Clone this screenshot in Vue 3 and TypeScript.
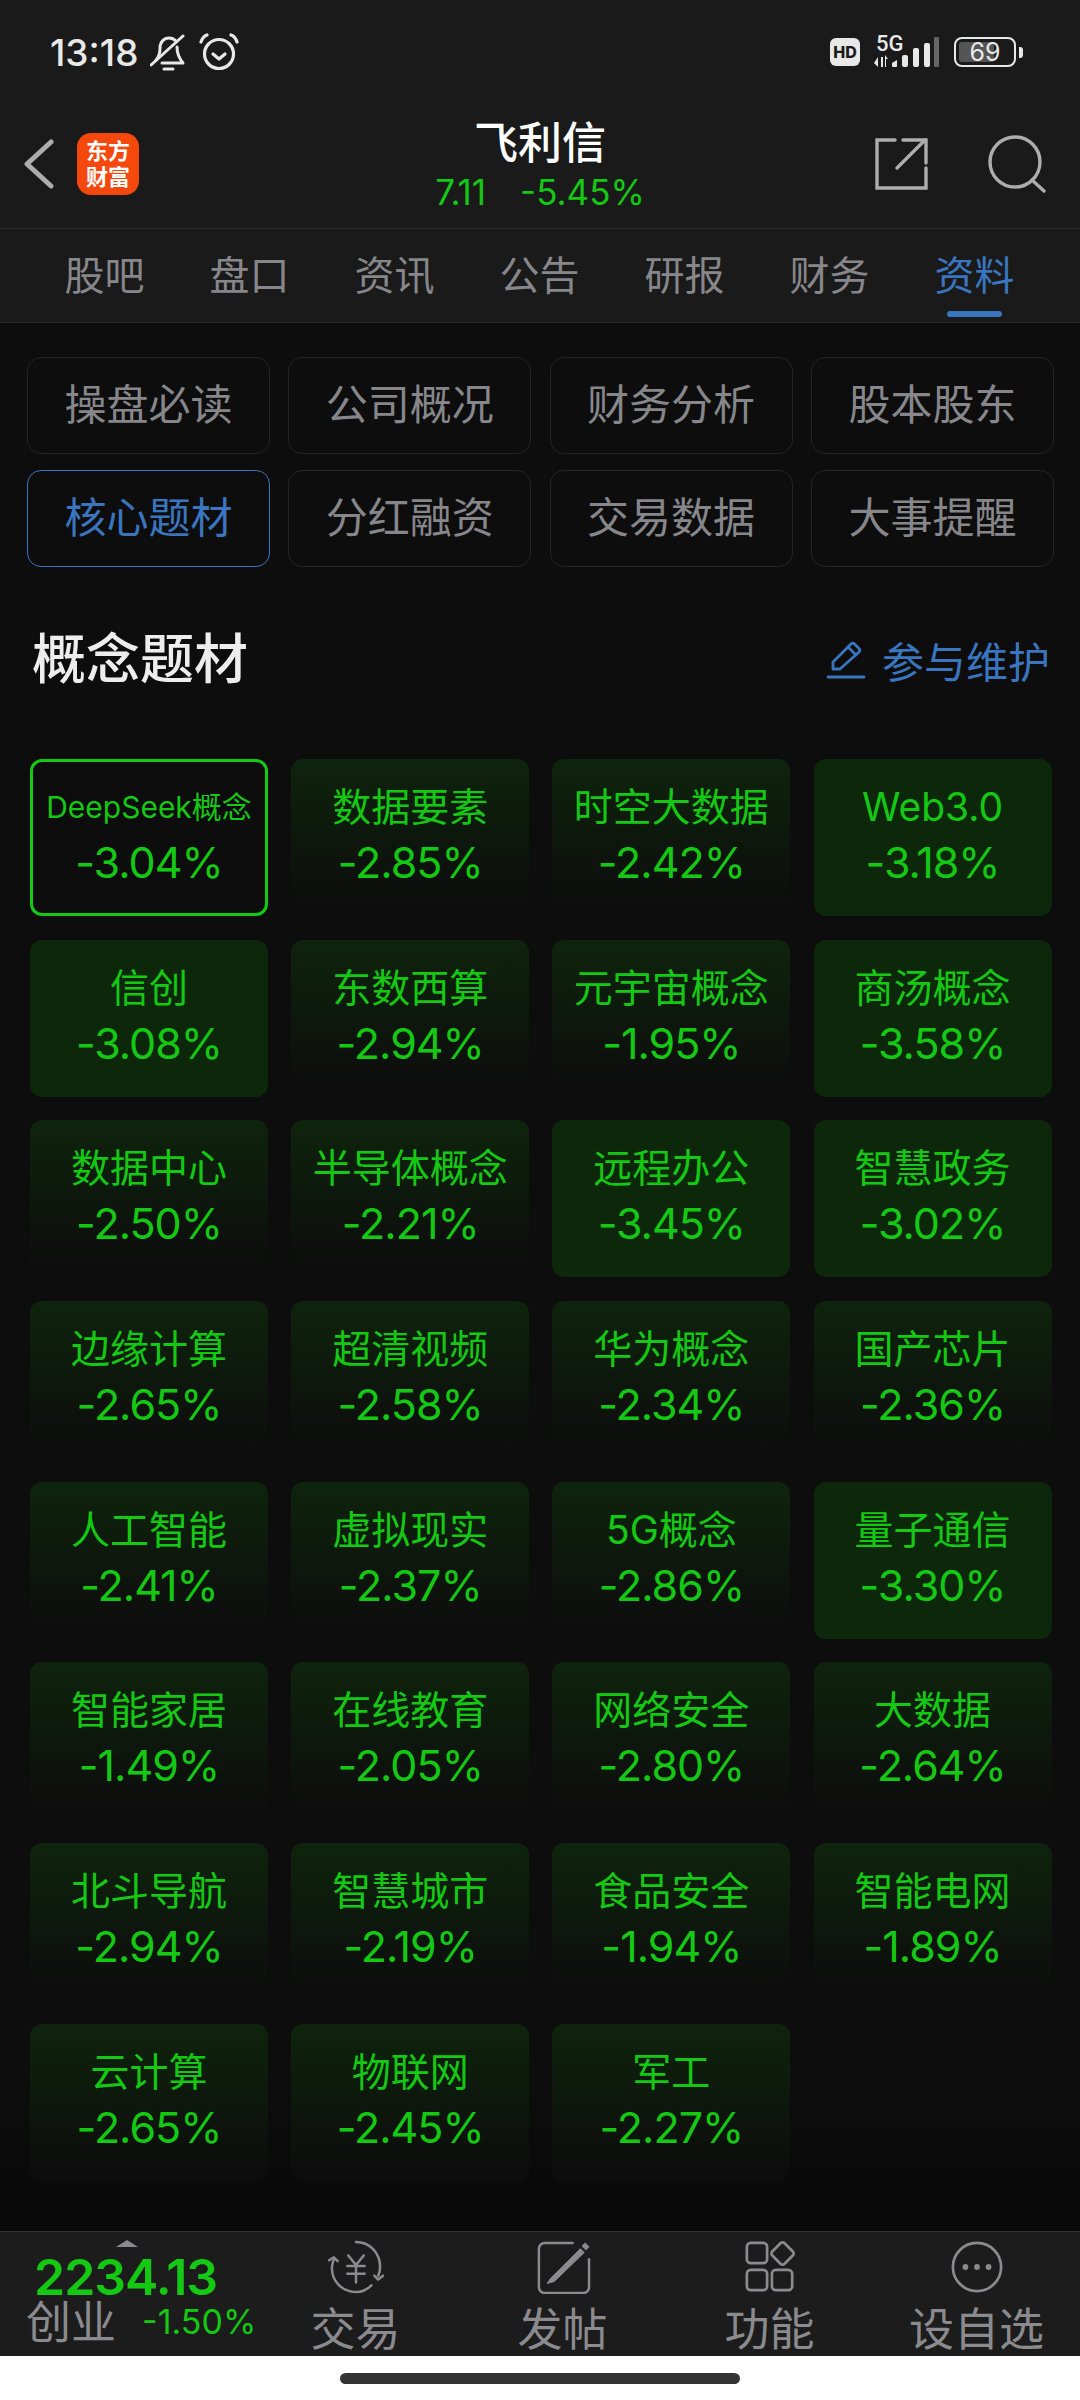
<template>
  <div class="page">
    <div class="top-bar">
      <div class="status">
        <div class="status-left">
          <span class="time">13:18</span>
          <svg class="bell" viewBox="0 0 36 38" width="36" height="38" fill="none" stroke="#e8e8e8" stroke-width="3" stroke-linecap="round" stroke-linejoin="round">
            <path d="M6 27c3-3 4-6 4-12 0-6 4-10 9-10 3 0 5 1 7 3" />
            <path d="M27 14c0 6 1 10 6 16H12" />
            <path d="M1 32 33 3" />
            <path d="M14 36h9" />
          </svg>
          <svg class="alarm" viewBox="0 0 40 38" width="40" height="38" fill="none" stroke="#e8e8e8" stroke-width="3.2" stroke-linecap="round" stroke-linejoin="round">
            <circle cx="20" cy="21" r="14.5" />
            <path d="M14 21l6 5 6-5" />
            <path d="M2 9c1-3 3-6 6-7" />
            <path d="M38 9c-1-3-3-6-6-7" />
          </svg>
        </div>
        <div class="status-right">
          <span class="hd">HD</span>
          <svg class="signal" viewBox="0 0 66 34" width="66" height="34">
            <text x="3" y="16" font-size="22" font-family="Roboto, sans-serif" font-weight="500" fill="#e8e8e8">5G</text>
            <path d="M5 22v10l-4-4zM8 22h2v10H8zM12 20l3 4h-2v8h-1z" fill="#e8e8e8" />
            <path d="M19 31v-3l5-3v6a1 1 0 0 1-1 1h-3a1 1 0 0 1-1-1z" fill="#e8e8e8" />
            <rect x="29" y="20" width="6" height="12" rx="2" fill="#e8e8e8" />
            <rect x="40" y="13" width="6" height="19" rx="2" fill="#e8e8e8" />
            <rect x="51" y="8" width="6" height="24" rx="2" fill="#e8e8e8" />
            <rect x="61" y="2" width="5" height="30" rx="1" fill="#666" />
          </svg>
          <div class="battery">
            <div class="battery-body">
              <i class="battery-fill"></i>
              <span class="battery-num">69</span>
            </div>
            <i class="battery-nub"></i>
          </div>
        </div>
      </div>

      <div class="nav">
        <div class="nav-left">
          <svg viewBox="0 0 30 50" width="30" height="50" fill="none" stroke="#adadad" stroke-width="5" stroke-linecap="round" stroke-linejoin="round">
            <path d="M27 3 3 25l24 22" />
          </svg>
          <div class="logo"><span>东方</span><span>财富</span></div>
        </div>
        <div class="nav-title">
          <div class="stock-name">飞利信</div>
          <div class="stock-price"><span>7.11</span><span>-5.45%</span></div>
        </div>
        <div class="nav-right">
          <svg viewBox="0 0 54 54" width="54" height="54" fill="none" stroke="#adadad" stroke-width="3.4" stroke-linecap="round" stroke-linejoin="miter">
            <path d="M21 3H3v48h49V31" />
            <path d="M23 31 51 3" />
            <path d="M29 3h23v23" />
          </svg>
          <svg viewBox="0 0 58 58" width="58" height="58" fill="none" stroke="#adadad" stroke-width="3.4" stroke-linecap="round">
            <circle cx="27" cy="27" r="25" />
            <path d="M44 45 56 56" />
          </svg>
        </div>
      </div>

      <div class="tabs">
        <div v-for="t in tabs" :key="t" class="tab" :class="{ on: t === '资料' }">
          {{ t }}
          <i v-if="t === '资料'" class="tab-line"></i>
        </div>
      </div>
    </div>

    <div class="content">
      <div class="menu">
        <div v-for="m in menus" :key="m" class="menu-btn" :class="{ on: m === '核心题材' }">{{ m }}</div>
      </div>

      <div class="section-head">
        <div class="section-title">概念题材</div>
        <div class="maintain">
          <svg viewBox="0 0 40 40" width="40" height="40" fill="none" stroke="#3a76bf" stroke-width="2.8" stroke-linejoin="round" stroke-linecap="round">
            <path d="M7 29v-7L25 4a2.5 2.5 0 0 1 3.5 0l4.5 4.5a2.5 2.5 0 0 1 0 3.5L14 29z" />
            <path d="M22 7l8 8" />
            <path d="M2 37h36" />
          </svg>
          <span>参与维护</span>
        </div>
      </div>

      <div class="concepts">
        <div
          v-for="c in concepts"
          :key="c.name"
          class="concept"
          :class="{ picked: c.picked, heavy: !c.picked && c.pct <= -3 }"
        >
          <div class="concept-name" :class="{ small: c.name.length > 8 }">{{ c.name }}</div>
          <div class="concept-pct">{{ c.pct.toFixed(2) }}%</div>
        </div>
      </div>
    </div>

    <div class="bottom">
      <div class="index">
        <i class="index-arrow"></i>
        <div class="index-value">2234.13</div>
        <div class="index-row">
          <span class="index-name">创业</span>
          <span class="index-pct">-1.50%</span>
        </div>
      </div>
      <div class="bottom-item">
        <svg viewBox="0 0 60 56" width="60" height="56" fill="none" stroke="#8b8b8f" stroke-width="2.6" stroke-linecap="round" stroke-linejoin="round">
          <path d="M30 2c14 0 25 11 25 26 0 4-1 7-2 9" />
          <path d="M46 47c-4 4-10 7-16 7-14 0-25-11-25-25 0-3 1-6 2-9" />
          <path d="M2 21l5-3 4 4M58 37l-5 4-4-4" />
          <path d="M22 16l8 10 8-10M21 27h18M21 35h18M30 26v18" />
        </svg>
        <span>交易</span>
      </div>
      <div class="bottom-item">
        <svg viewBox="0 0 56 56" width="56" height="56" fill="none" stroke="#8b8b8f" stroke-width="2.6" stroke-linecap="round" stroke-linejoin="round">
          <path d="M38 3H9a6 6 0 0 0-6 6v40a6 6 0 0 0 6 6h40a6 6 0 0 0 6-6V20" />
          <path d="M15 40 46 9l4 4-31 30-7 2z" fill="#8b8b8f" stroke-width="1" />
          <path d="M48 6l3-3 4 4-3 3z" fill="#8b8b8f" stroke-width="1" />
        </svg>
        <span>发帖</span>
      </div>
      <div class="bottom-item">
        <svg viewBox="0 0 56 56" width="56" height="56" fill="none" stroke="#8b8b8f" stroke-width="2.8" stroke-linejoin="round">
          <rect x="4" y="3" width="21" height="21" rx="4" />
          <rect x="4" y="31" width="21" height="21" rx="4" />
          <rect x="30" y="31" width="21" height="21" rx="4" />
          <rect x="32" y="5" width="18" height="18" rx="3" transform="rotate(45 41 14)" />
        </svg>
        <span>功能</span>
      </div>
      <div class="bottom-item">
        <svg viewBox="0 0 56 56" width="56" height="56" fill="none" stroke="#8b8b8f" stroke-width="2.8">
          <circle cx="28" cy="28" r="25" />
          <circle cx="16" cy="28" r="3" fill="#8b8b8f" stroke="none" />
          <circle cx="28" cy="28" r="3" fill="#8b8b8f" stroke="none" />
          <circle cx="40" cy="28" r="3" fill="#8b8b8f" stroke="none" />
        </svg>
        <span>设自选</span>
      </div>
    </div>

    <div class="gesture"><i></i></div>
  </div>
</template>

<script setup lang="ts">
interface Concept {
  name: string
  pct: number
  picked?: boolean
}

const tabs = ['股吧', '盘口', '资讯', '公告', '研报', '财务', '资料']

const menus = ['操盘必读', '公司概况', '财务分析', '股本股东', '核心题材', '分红融资', '交易数据', '大事提醒']

const concepts: Concept[] = [
  { name: 'DeepSeek概念', pct: -3.04, picked: true },
  { name: '数据要素', pct: -2.85 },
  { name: '时空大数据', pct: -2.42 },
  { name: 'Web3.0', pct: -3.18 },
  { name: '信创', pct: -3.08 },
  { name: '东数西算', pct: -2.94 },
  { name: '元宇宙概念', pct: -1.95 },
  { name: '商汤概念', pct: -3.58 },
  { name: '数据中心', pct: -2.5 },
  { name: '半导体概念', pct: -2.21 },
  { name: '远程办公', pct: -3.45 },
  { name: '智慧政务', pct: -3.02 },
  { name: '边缘计算', pct: -2.65 },
  { name: '超清视频', pct: -2.58 },
  { name: '华为概念', pct: -2.34 },
  { name: '国产芯片', pct: -2.36 },
  { name: '人工智能', pct: -2.41 },
  { name: '虚拟现实', pct: -2.37 },
  { name: '5G概念', pct: -2.86 },
  { name: '量子通信', pct: -3.3 },
  { name: '智能家居', pct: -1.49 },
  { name: '在线教育', pct: -2.05 },
  { name: '网络安全', pct: -2.8 },
  { name: '大数据', pct: -2.64 },
  { name: '北斗导航', pct: -2.94 },
  { name: '智慧城市', pct: -2.19 },
  { name: '食品安全', pct: -1.94 },
  { name: '智能电网', pct: -1.89 },
  { name: '云计算', pct: -2.65 },
  { name: '物联网', pct: -2.45 },
  { name: '军工', pct: -2.27 },
]
</script>

<style scoped>
.page {
  width: 1080px;
  height: 2400px;
  display: flex;
  flex-direction: column;
  background: #0d0d0d;
  font-family: Inter, "Noto Sans CJK SC", sans-serif;
  overflow: hidden;
}

.top-bar {
  background: #1a1a1a;
  border-bottom: 1px solid #2a2a2a;
}

.status {
  height: 104px;
  padding: 0 57px 0 50px;
  display: flex;
  justify-content: space-between;
  align-items: flex-start;
  box-sizing: border-box;
}

.status-left {
  display: flex;
  align-items: center;
  height: 40px;
  margin-top: 32px;
}

.time {
  font-size: 37px;
  font-weight: 500;
  color: #e8e8e8;
}

.bell {
  margin-left: 12px;
}

.alarm {
  margin-left: 13px;
}

.status-right {
  display: flex;
  align-items: center;
  height: 34px;
  margin-top: 35px;
}

.hd {
  width: 30px;
  height: 28px;
  border-radius: 6px;
  background: #e8e8e8;
  color: #1a1a1a;
  font-size: 16px;
  font-weight: 800;
  line-height: 28px;
  text-align: center;
}

.signal {
  margin-left: 13px;
  overflow: visible;
}

.battery {
  margin-left: 15px;
  display: flex;
  align-items: center;
}

.battery-body {
  width: 62px;
  height: 30px;
  box-sizing: border-box;
  border: 2.5px solid #e8e8e8;
  border-radius: 8px;
  position: relative;
  padding: 3px;
}

.battery-fill {
  display: block;
  width: 68%;
  height: 100%;
  background: #555;
  border-radius: 3px;
}

.battery-num {
  position: absolute;
  left: 0;
  right: 0;
  top: -2px;
  text-align: center;
  font-size: 25px;
  line-height: 30px;
  color: #e8e8e8;
}

.battery-nub {
  width: 4px;
  height: 11px;
  margin-left: 3px;
  border-radius: 0 3px 3px 0;
  background: #e8e8e8;
}

.nav {
  height: 124px;
  padding: 0 34px 0 24px;
  display: grid;
  grid-template-columns: 1fr auto 1fr;
  align-items: center;
  border-bottom: 1px solid #2e2e2e;
}

.nav-left {
  display: flex;
  align-items: center;
  gap: 23px;
  margin-top: -4px;
}

.logo {
  width: 62px;
  height: 62px;
  border-radius: 14px;
  background: #f5480c;
  color: #fff;
  display: flex;
  flex-direction: column;
  align-items: center;
  justify-content: center;
  font-size: 22px;
  font-weight: 700;
  line-height: 26px;
}

.nav-title {
  text-align: center;
  margin: -1px 0 0 10px;
}

.stock-name {
  font-size: 44px;
  font-weight: 500;
  line-height: 52px;
  color: #fff;
}

.stock-price {
  display: flex;
  justify-content: center;
  gap: 34px;
  font-size: 35px;
  line-height: 46px;
  color: #14c814;
}

.nav-right {
  display: flex;
  justify-content: flex-end;
  align-items: center;
  gap: 60px;
  margin-top: -4px;
}

.tabs {
  height: 93px;
  padding: 0 32px;
  display: flex;
}

.tab {
  width: 145px;
  position: relative;
  text-align: center;
  font-size: 40px;
  line-height: 94px;
  color: #87878b;
}

.tab.on {
  color: #3a76bf;
}

.tab-line {
  position: absolute;
  left: 45px;
  bottom: 5px;
  width: 55px;
  height: 6px;
  border-radius: 3px;
  background: #3a76bf;
}

.content {
  flex: 1;
  min-height: 0;
  padding: 34px 26px 0 27px;
  background: linear-gradient(180deg, #0d0d0d 92%, #080808 100%);
}

.menu {
  display: grid;
  grid-template-columns: repeat(4, 243px);
  column-gap: 18.3px;
  row-gap: 16px;
}

.menu-btn {
  height: 97px;
  box-sizing: border-box;
  border: 1.5px solid #242424;
  border-radius: 14px;
  font-size: 42px;
  line-height: 94px;
  text-align: center;
  color: #87878b;
}

.menu-btn.on {
  border-color: #3a76bf;
  color: #3a76bf;
}

.section-head {
  display: flex;
  justify-content: space-between;
  align-items: center;
  margin-top: 53px;
  height: 70px;
  padding: 0 4px 0 5px;
}

.section-title {
  font-size: 54px;
  font-weight: 500;
  color: #ededed;
}

.maintain {
  display: flex;
  align-items: center;
  gap: 16px;
  font-size: 42px;
  color: #3a76bf;
  margin-top: 9px;
}

.concepts {
  display: grid;
  grid-template-columns: repeat(4, 238px);
  column-gap: 23.2px;
  row-gap: 23.7px;
  margin: 69px 0 0 3px;
}

.concept {
  height: 157px;
  box-sizing: border-box;
  border-radius: 12px;
  padding-top: 21px;
  text-align: center;
  color: #14c814;
  background: linear-gradient(180deg, #0e240c 0%, #0d0d0d 92%);
}

.concept.heavy {
  background: #0d270b;
}

.concept.picked {
  background: none;
  border: 3px solid #14c814;
  padding-top: 18px;
}

.concept-name {
  font-size: 39px;
  line-height: 54px;
}

.concept-name.small {
  font-size: 30px;
}

.concept-pct {
  font-size: 43px;
  line-height: 56px;
  letter-spacing: -1px;
}

.bottom {
  height: 125px;
  box-sizing: border-box;
  flex: none;
  background: #1c1c1c;
  border-top: 1px solid #333;
  display: flex;
  color: #8b8b8f;
}

.index {
  width: 252px;
  flex: none;
  position: relative;
  padding-left: 26px;
  box-sizing: border-box;
}

.index-arrow {
  position: absolute;
  left: 116px;
  top: 8px;
  width: 0;
  height: 0;
  border-left: 11px solid transparent;
  border-right: 11px solid transparent;
  border-bottom: 7px solid #8b8b8f;
}

.index-value {
  margin-left: 8px;
  margin-top: 21px;
  font-size: 50px;
  font-weight: 600;
  line-height: 48px;
  letter-spacing: -1px;
  color: #14c814;
  white-space: nowrap;
}

.index-row {
  display: flex;
  align-items: center;
  margin-top: -1px;
  white-space: nowrap;
}

.index-name {
  font-size: 45px;
  line-height: 46px;
}

.index-pct {
  margin-left: 26px;
  margin-top: -2px;
  font-size: 34px;
  line-height: 44px;
  color: #14c814;
}

.bottom-item {
  width: 207px;
  flex: none;
  display: flex;
  flex-direction: column;
  align-items: center;
  padding-top: 8px;
  box-sizing: border-box;
}

.bottom-item span {
  font-size: 45px;
  line-height: 52px;
  margin-top: 10px;
}

.gesture {
  height: 44px;
  flex: none;
  background: #fff;
  display: flex;
  justify-content: center;
  padding-top: 17px;
  box-sizing: border-box;
}

.gesture i {
  width: 400px;
  height: 11px;
  border-radius: 6px;
  background: #333;
}
</style>
